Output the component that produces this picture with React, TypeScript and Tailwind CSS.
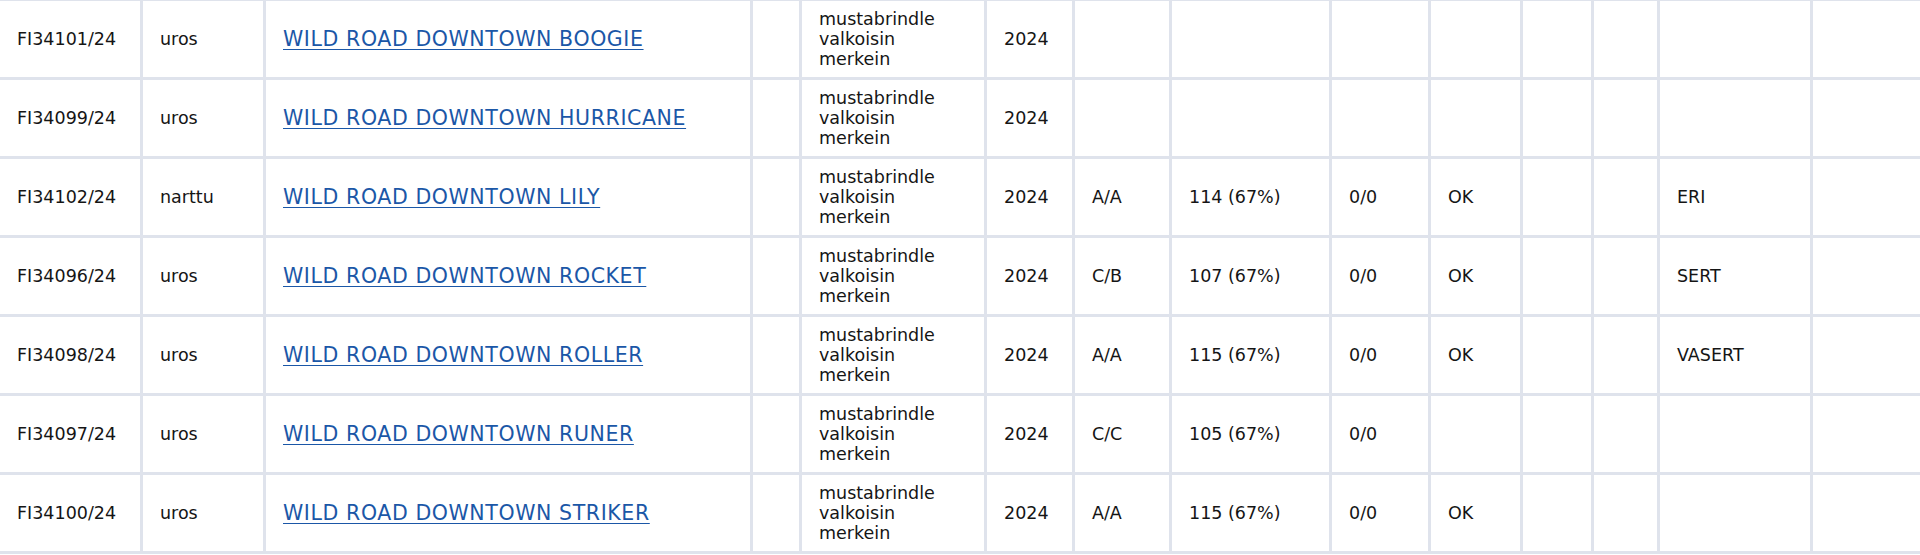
import React from 'react';

type Row = {
  reg: string;
  sex: string;
  name: string;
  year: string;
  hd?: string;
  score?: string;
  ratio?: string;
  eye?: string;
  cls?: string;
};

const rows: Row[] = [
  { reg: 'FI34101/24', sex: 'uros', name: 'WILD ROAD DOWNTOWN BOOGIE', year: '2024' },
  { reg: 'FI34099/24', sex: 'uros', name: 'WILD ROAD DOWNTOWN HURRICANE', year: '2024' },
  { reg: 'FI34102/24', sex: 'narttu', name: 'WILD ROAD DOWNTOWN LILY', year: '2024', hd: 'A/A', score: '114 (67%)', ratio: '0/0', eye: 'OK', cls: 'ERI' },
  { reg: 'FI34096/24', sex: 'uros', name: 'WILD ROAD DOWNTOWN ROCKET', year: '2024', hd: 'C/B', score: '107 (67%)', ratio: '0/0', eye: 'OK', cls: 'SERT' },
  { reg: 'FI34098/24', sex: 'uros', name: 'WILD ROAD DOWNTOWN ROLLER', year: '2024', hd: 'A/A', score: '115 (67%)', ratio: '0/0', eye: 'OK', cls: 'VASERT' },
  { reg: 'FI34097/24', sex: 'uros', name: 'WILD ROAD DOWNTOWN RUNER', year: '2024', hd: 'C/C', score: '105 (67%)', ratio: '0/0' },
  { reg: 'FI34100/24', sex: 'uros', name: 'WILD ROAD DOWNTOWN STRIKER', year: '2024', hd: 'A/A', score: '115 (67%)', ratio: '0/0', eye: 'OK' },
];

function Cell({ children }: { children?: React.ReactNode }) {
  return <div className="bg-white h-[76px] px-[17px] flex items-center">{children}</div>;
}

function App() {
  return (
    <div
      className="min-h-screen bg-white text-[17.5px] leading-[20px] text-[#151515]"
      style={{ fontFamily: '"DejaVu Sans", Verdana, sans-serif' }}
    >
      <div className="grid grid-cols-[140px_120px_484px_46px_182px_85px_94px_157px_96px_89px_68px_63px_150px_1fr] gap-[3px] bg-[#dfe3ec] pt-px pb-[3px]">
        {rows.map((r) => (
          <React.Fragment key={r.reg}>
            <Cell>{r.reg}</Cell>
            <Cell>{r.sex}</Cell>
            <Cell>
              <a href="#" className="text-[20.5px] tracking-[0.6px] text-[#1b57a7] underline underline-offset-[3px] decoration-1">
                {r.name}
              </a>
            </Cell>
            <Cell />
            <Cell>
              <div>
                <div>mustabrindle</div>
                <div>valkoisin</div>
                <div>merkein</div>
              </div>
            </Cell>
            <Cell>{r.year}</Cell>
            <Cell>{r.hd}</Cell>
            <Cell>{r.score}</Cell>
            <Cell>{r.ratio}</Cell>
            <Cell>{r.eye}</Cell>
            <Cell />
            <Cell />
            <Cell>{r.cls}</Cell>
            <Cell />
          </React.Fragment>
        ))}
      </div>
    </div>
  );
}

export default App;
